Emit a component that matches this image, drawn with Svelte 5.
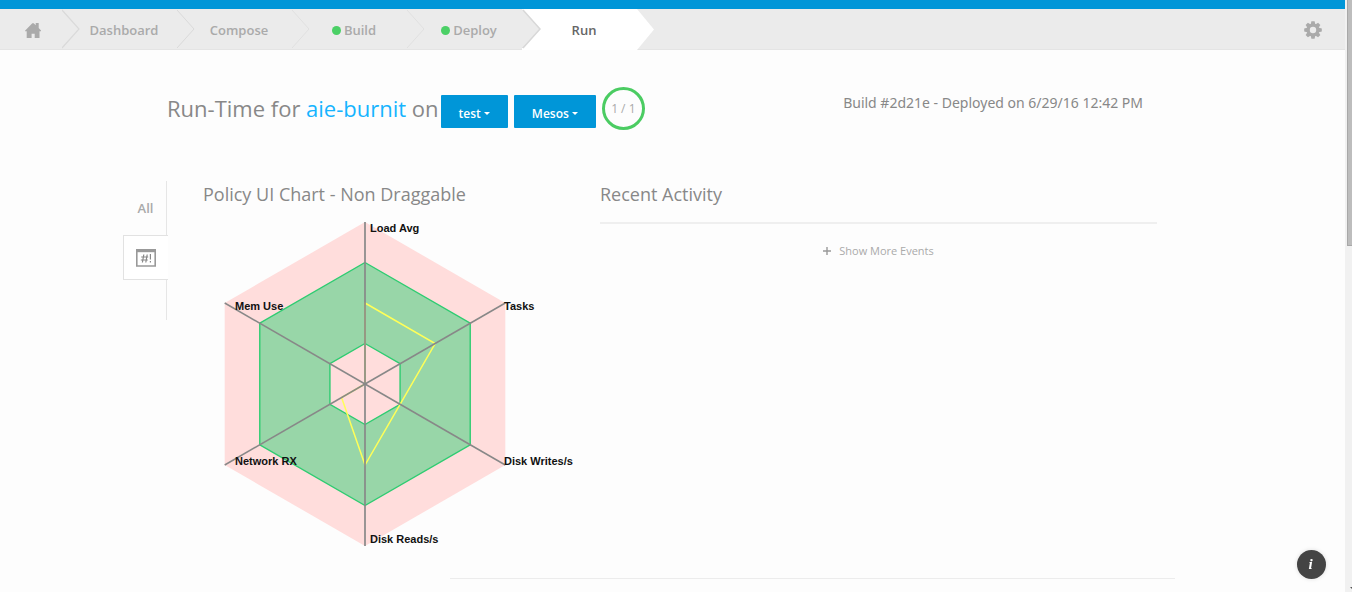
<script>
  const steps = [
    { label: 'Dashboard', line: '#dadada' },
    { label: 'Compose', line: '#e0e0e0' },
    { label: 'Build', done: true, line: '#e0e0e0' },
    { label: 'Deploy', done: true, line: '#d8d8d8' },
    { label: 'Run', active: true }
  ];

  const RADIUS = 162;
  const axes = [
    { name: 'Load Avg', value: 0.5, x: 5, y: -152 },
    { name: 'Tasks', value: 0.5, x: 139, y: -74 },
    { name: 'Disk Writes/s', value: 0.25, x: 139, y: 81 },
    { name: 'Disk Reads/s', value: 0.5, x: 5, y: 159 },
    { name: 'Network RX', value: 0.167, x: -130, y: 81 },
    { name: 'Mem Use', value: 0, x: -130, y: -74 }
  ];

  // Point on axis i at a fraction of the full radius
  function point(i, fraction) {
    const a = (Math.PI / 3) * i;
    return [Math.sin(a) * RADIUS * fraction, -Math.cos(a) * RADIUS * fraction];
  }
  const ring = (fraction) => axes.map((_, i) => point(i, fraction).join(',')).join(' ');
  const values = axes.map((a, i) => point(i, a.value).join(',')).join(' ');
  const band = `M${ring(0.75)}Z M${ring(0.25)}Z`;
</script>

<div class="page">
  <header>
    <nav aria-label="Pipeline">
      <ol>
        <li class="home">
          <a href="#home" aria-label="Home">
            <svg width="16" height="16" viewBox="0 0 16 16"><path fill="#aaa" d="M0 8.7 7.3 1.3h1.4l2 2V1h3v5L16 8.5v.7h-1.5V16H9.7v-4.2H6.6V16H1.7V9.2H0z" /></svg>
          </a>
          <svg class="chevron" width="19" height="40" viewBox="0 0 19 40"><path d="M0 1 17 20 0 39" fill="none" stroke="#dadada" stroke-width="1.2" /></svg>
        </li>
        {#each steps as step}
          <li class:active={step.active}>
            <a href="#{step.label.toLowerCase()}" aria-current={step.active ? 'step' : undefined}>
              {#if step.done}<span class="dot"></span>{/if}{step.label}
            </a>
            <svg class="chevron" width="19" height="41" viewBox="0 0 19 41">
              {#if step.active}
                <path d="M0 0 17 20.5 0 41z" fill="#fff" />
              {:else}
                <path d="M0 1 17 20 0 39" fill="none" stroke={step.line} />
              {/if}
            </svg>
            {#if step.active}
              <svg class="notch" width="19" height="41" viewBox="0 0 19 41"><path d="M0 0 18 20 0 39z" fill="#ebebeb" /><path d="M1 1 18 20 1 39" fill="none" stroke="#d8d8d8" stroke-width="1.5" /></svg>
            {/if}
          </li>
        {/each}
      </ol>
      <button class="gear" aria-label="Settings">
        <svg width="18" height="18" viewBox="-9 -9 18 18">
          <g fill="#aaa">
            {#each [0, 45, 90, 135, 180, 225, 270, 315] as turn}
              <path d="M-2.4-5 -1.6-8.8H1.6L2.4-5z" transform="rotate({turn})" />
            {/each}
          </g>
          <circle r="4.8" fill="none" stroke="#aaa" stroke-width="3.2" />
        </svg>
      </button>
    </nav>
  </header>

  <main>
    <div class="heading">
      <h1>Run-Time for <a href="#app">aie-burnit</a> on</h1>
      <button class="drop">test<span class="caret"></span></button>
      <button class="drop">Mesos<span class="caret"></span></button>
      <span class="count">1 / 1</span>
      <p>Build #2d21e - Deployed on 6/29/16 12:42 PM</p>
    </div>

    <div class="body">
      <div class="tabs">
        <button class="tab">All</button>
        <button class="tab current" aria-label="Policy chart">
          <svg width="20" height="18" viewBox="0 0 20 18">
            <path d="M.8.8h18.4v16.2H.8z" fill="#fff" stroke="#999" stroke-width="1.6" />
            <path d="M0 0h20v3.2H0z" fill="#999" />
            <path d="M7.8 5.5 6.4 13.5M11.2 5.5 9.8 13.5M5.2 8h7M4.8 11h7M14.4 5v5.5M14.4 12v1.6" fill="none" stroke="#888" stroke-width="1.2" />
          </svg>
        </button>
      </div>

      <section class="chart">
        <h2>Policy UI Chart - Non Draggable</h2>
        <svg width="384" height="332" viewBox="-162 -166 384 332" role="img" aria-label="Policy chart">
          <polygon points={ring(1)} fill="#ffdddc" />
          <path d={band} fill="#98d6a8" fill-rule="evenodd" stroke="#2ecc71" stroke-width="1.4" />
          <polygon points={values} fill="none" stroke="#ffff58" stroke-width="1.5" />
          {#each axes as axis, i}
            {@const end = point(i, 1)}
            <line x1="0" y1="0" x2={end[0]} y2={end[1]} stroke="#888" stroke-width={i % 3 === 0 ? 1.7 : 1.5} />
          {/each}
          {#each axes as axis}
            <text x={axis.x} y={axis.y}>{axis.name}</text>
          {/each}
        </svg>
      </section>

      <section class="activity">
        <h2>Recent Activity</h2>
        <button class="more">
          <svg width="8" height="8" viewBox="0 0 8 8"><path d="M4 0v8M0 4h8" stroke="#999" stroke-width="1.4" /></svg>
          Show More Events
        </button>
      </section>
    </div>
    <hr />
  </main>

  <button class="info" aria-label="Information">i</button>
  <div class="scroll"><div class="thumb"></div><span class="down"></span></div>
</div>

<style>
  :global(body) {
    margin: 0;
    background: #fdfdfd;
  }
  .page {
    box-sizing: border-box;
    min-height: 100vh;
    padding-right: 7px;
    font-family: 'Open Sans', 'Noto Sans', sans-serif;
    color: #888;
  }
  button {
    border: 0;
    padding: 0;
    background: none;
    font: inherit;
    color: inherit;
    cursor: pointer;
  }
  a {
    color: inherit;
    text-decoration: none;
  }
  h1, h2, p, ol {
    margin: 0;
    padding: 0;
    font-weight: 400;
  }
  svg {
    display: block;
    flex: none;
  }
  header {
    border-top: 9px solid #0096d8;
  }
  nav {
    display: flex;
    justify-content: space-between;
    align-items: center;
    height: 41px;
    padding-right: 23px;
    background: #ebebeb;
    box-shadow: inset 0 -1px #e4e4e4;
  }
  ol {
    display: flex;
    list-style: none;
    height: 41px;
  }
  li {
    position: relative;
    box-sizing: border-box;
    display: flex;
    align-items: center;
    justify-content: center;
    width: 115px;
    padding-left: 9px;
    padding-top: 1px;
    font-size: 13px;
    font-weight: 600;
    color: #aaa;
  }
  li a {
    display: flex;
    align-items: center;
    gap: 3px;
  }
  .home {
    width: 62px;
    padding-left: 4px;
  }
  .active {
    background: #fff;
    color: #666;
  }
  .chevron, .notch {
    position: absolute;
    top: 0;
    left: 100%;
    z-index: 1;
  }
  .notch {
    left: 0;
  }
  .dot {
    width: 9px;
    height: 9px;
    border-radius: 50%;
    background: #4bd066;
  }
  main {
    max-width: 1171px;
    margin: 0 auto;
  }
  .heading {
    display: flex;
    align-items: center;
    gap: 6px;
    padding: 37px 115px 0 80px;
  }
  h1 {
    margin-right: -4px;
    padding-bottom: 2px;
    font-size: 22px;
    line-height: 40px;
  }
  h1 a {
    color: #16b4ff;
  }
  .drop {
    display: flex;
    align-items: center;
    gap: 3px;
    height: 33px;
    margin-top: 6px;
    padding: 4px 18px 0;
    background: #0096d8;
    border-radius: 1px;
    color: #fff;
    font-size: 12px;
    font-weight: 600;
  }
  .caret {
    border: 3px solid transparent;
    border-top-color: #fff;
    border-bottom: 0;
  }
  .count {
    box-sizing: border-box;
    width: 43px;
    height: 43px;
    border: 3px solid #4bcc62;
    border-radius: 50%;
    text-align: center;
    font-size: 12px;
    line-height: 37px;
    color: #aaa;
  }
  .heading p {
    margin-left: auto;
    padding-bottom: 12px;
    font-family: 'Noto Sans', 'Open Sans', sans-serif;
    font-size: 14px;
    line-height: 20px;
  }
  .body {
    display: flex;
    align-items: flex-start;
    padding: 51px 101px 0 36px;
  }
  .tabs {
    box-sizing: border-box;
    width: 44px;
    height: 139px;
    border-right: 1px solid #e6e6e6;
  }
  .tab {
    display: flex;
    align-items: center;
    justify-content: center;
    box-sizing: border-box;
    width: 45px;
    height: 54px;
    font-size: 13px;
    font-weight: 600;
    color: #aaa;
  }
  .current {
    height: 45px;
    border: 1px solid #e2e2e2;
    border-right: 0;
    background: #fff;
  }
  .chart {
    width: 397px;
    margin-left: 36px;
  }
  h2 {
    font-size: 18px;
    line-height: 26px;
  }
  .chart h2 {
    padding-bottom: 11px;
  }
  text {
    font: bold 11px 'Liberation Sans', Arial, sans-serif;
    fill: #111;
  }
  .activity {
    flex: 1;
  }
  .activity h2 {
    padding-bottom: 15px;
    border-bottom: 2px solid #efefef;
  }
  .more {
    display: flex;
    align-items: center;
    gap: 8px;
    margin: 19px auto 0;
    font-size: 11px;
    line-height: 16px;
    color: #aaa;
  }
  hr {
    margin: 28px 83px 0 363px;
    border: 0;
    border-top: 1px solid #ececec;
  }
  .info {
    position: fixed;
    right: 26px;
    bottom: 13px;
    width: 29px;
    height: 29px;
    padding-right: 2px;
    border-radius: 50%;
    background: #444;
    box-shadow: 0 0 4px #ddd;
    color: #fff;
    font: italic bold 15px 'Liberation Serif', serif;
  }
  .scroll {
    position: fixed;
    top: 0;
    right: 0;
    bottom: 0;
    width: 7px;
    background: #f1f1f1;
    overflow: hidden;
  }
  .thumb {
    box-sizing: border-box;
    height: 246px;
    margin-left: 2px;
    border: 1px solid #a8a8a8;
    border-width: 0 0 1px 1px;
    background: #bdbdbd;
  }
  .down {
    position: absolute;
    left: 5px;
    bottom: 2px;
    border: 3px solid transparent;
    border-top-color: #555;
    border-bottom: 0;
  }
</style>
